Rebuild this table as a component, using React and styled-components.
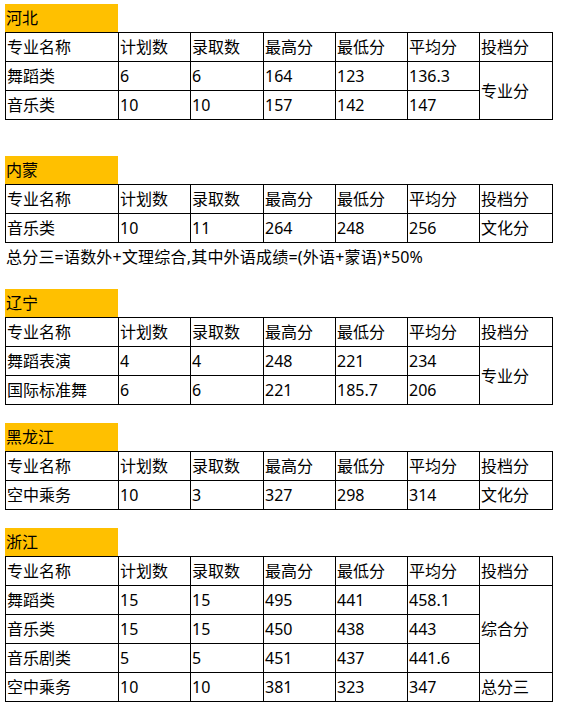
import React from "react";
import styled, { createGlobalStyle } from "styled-components";

const Global = createGlobalStyle`
  html, body { margin: 0; padding: 0; background: #fff; }
  body { font-family: "Noto Sans", "Noto Sans CJK SC", sans-serif; color: #000; }
`;

const Page = styled.div`
  padding: 4px 0 0 5px;
  display: flex;
  flex-direction: column;
`;

const Section = styled.section`
  display: flex;
  flex-direction: column;
  margin-bottom: ${(p) => p.$gap}px;
`;

const Title = styled.div`
  width: 113px;
  height: 28px;
  background: #ffc000;
  font-size: 16px;
  line-height: 28px;
  padding-left: 1px;
  box-sizing: border-box;
`;

const Table = styled.table`
  border-collapse: collapse;
  table-layout: fixed;
  width: 548px;
  font-size: 16px;
`;

const Cell = styled.td`
  border: 1px solid #000;
  height: 28px;
  padding: 0 0 0 1px;
  line-height: 20px;
  vertical-align: middle;
  white-space: nowrap;
  overflow: hidden;
  text-align: left;
`;

const Note = styled.div`
  height: 28px;
  line-height: 28px;
  font-size: 16px;
  padding-left: 1px;
  letter-spacing: 0.2px;
  white-space: nowrap;
`;

const headers = ["专业名称", "计划数", "录取数", "最高分", "最低分", "平均分", "投档分"];
const widths = [113, 72, 73, 72, 72, 72, 73];

const sections = [
  {
    title: "河北",
    rows: [
      ["舞蹈类", "6", "6", "164", "123", "136.3"],
      ["音乐类", "10", "10", "157", "142", "147"],
    ],
    groups: [{ text: "专业分", span: 2 }],
    gap: 36,
  },
  {
    title: "内蒙",
    rows: [["音乐类", "10", "11", "264", "248", "256"]],
    groups: [{ text: "文化分", span: 1 }],
    note: "总分三=语数外+文理综合,其中外语成绩=(外语+蒙语)*50%",
    gap: 18,
  },
  {
    title: "辽宁",
    rows: [
      ["舞蹈表演", "4", "4", "248", "221", "234"],
      ["国际标准舞", "6", "6", "221", "185.7", "206"],
    ],
    groups: [{ text: "专业分", span: 2 }],
    gap: 18,
  },
  {
    title: "黑龙江",
    rows: [["空中乘务", "10", "3", "327", "298", "314"]],
    groups: [{ text: "文化分", span: 1 }],
    gap: 18,
  },
  {
    title: "浙江",
    rows: [
      ["舞蹈类", "15", "15", "495", "441", "458.1"],
      ["音乐类", "15", "15", "450", "438", "443"],
      ["音乐剧类", "5", "5", "451", "437", "441.6"],
      ["空中乘务", "10", "10", "381", "323", "347"],
    ],
    groups: [
      { text: "综合分", span: 3 },
      { text: "总分三", span: 1 },
    ],
    gap: 0,
  },
];

function ScoreTable({ rows, groups }) {
  const starts = {};
  let idx = 0;
  groups.forEach((g) => {
    starts[idx] = g;
    idx += g.span;
  });
  return (
    <Table>
      <colgroup>
        {widths.map((w, i) => (
          <col key={i} style={{ width: w }} />
        ))}
      </colgroup>
      <tbody>
        <tr>
          {headers.map((h) => (
            <Cell key={h}>{h}</Cell>
          ))}
        </tr>
        {rows.map((r, i) => (
          <tr key={i}>
            {r.map((c, j) => (
              <Cell key={j}>{c}</Cell>
            ))}
            {starts[i] && <Cell rowSpan={starts[i].span}>{starts[i].text}</Cell>}
          </tr>
        ))}
      </tbody>
    </Table>
  );
}

export default function App() {
  return (
    <>
      <Global />
      <Page>
        {sections.map((s) => (
          <Section key={s.title} $gap={s.gap}>
            <Title>{s.title}</Title>
            <ScoreTable rows={s.rows} groups={s.groups} />
            {s.note && <Note>{s.note}</Note>}
          </Section>
        ))}
      </Page>
    </>
  );
}
